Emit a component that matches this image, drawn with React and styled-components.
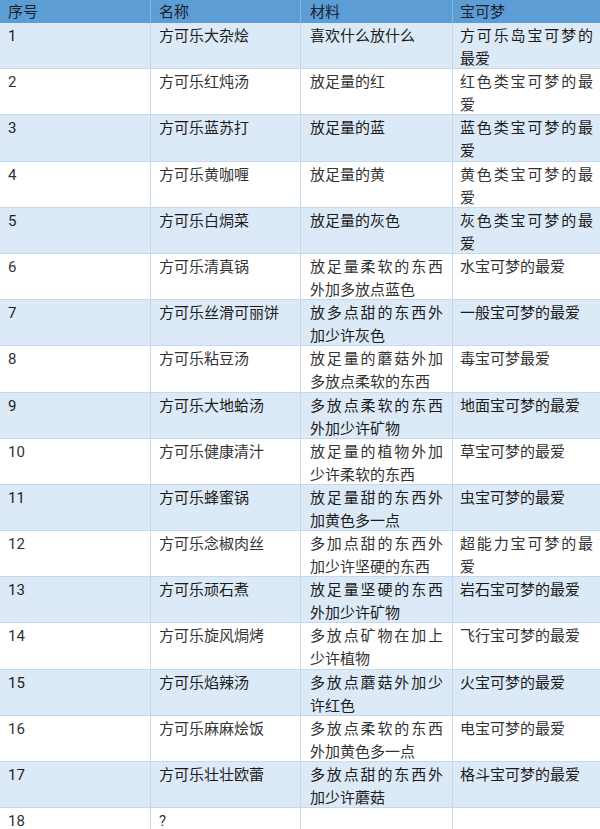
import React from 'react';
import styled, { createGlobalStyle } from 'styled-components';

const GlobalStyle = createGlobalStyle`
  html, body {
    margin: 0;
    padding: 0;
    background: #ffffff;
  }
  body {
    font-family: Roboto, "Noto Sans CJK SC", "Noto Sans", sans-serif;
    overflow: hidden;
  }
`;

const Table = styled.div`
  width: 600px;
  display: flex;
  flex-direction: column;
`;

const Row = styled.div`
  display: grid;
  grid-template-columns: 151px 150px 152px 147px;
  height: ${p => (p.head ? '23px' : '46.2px')};
  box-sizing: border-box;
  background: ${p => (p.head ? '#5d9dd6' : p.shaded ? '#dce9f6' : '#ffffff')};
  border-bottom: 1px solid ${p => (p.head ? '#5d9dd6' : '#c6d9ec')};
  color: ${p => (p.head ? '#17222e' : p.shaded ? '#1c1c1c' : '#333333')};
`;

const Cell = styled.div`
  box-sizing: border-box;
  padding: ${p => (p.head ? 1 : 2)}px ${p => p.pr}px 0 ${p => p.pl}px;
  font-size: 15px;
  line-height: 23px;
  text-align: justify;
  overflow: hidden;
  border-right: 1px solid ${p => (p.head ? '#88b8e4' : '#c6d9ec')};
  &:last-child {
    border-right: none;
  }
`;

const pads = [
  [8, 4],
  [8, 4],
  [9, 9],
  [7, 7],
];

const rows = [
  ['1', '方可乐大杂烩', '喜欢什么放什么', '方可乐岛宝可梦的最爱'],
  ['2', '方可乐红炖汤', '放足量的红', '红色类宝可梦的最爱'],
  ['3', '方可乐蓝苏打', '放足量的蓝', '蓝色类宝可梦的最爱'],
  ['4', '方可乐黄咖喱', '放足量的黄', '黄色类宝可梦的最爱'],
  ['5', '方可乐白焗菜', '放足量的灰色', '灰色类宝可梦的最爱'],
  ['6', '方可乐清真锅', '放足量柔软的东西外加多放点蓝色', '水宝可梦的最爱'],
  ['7', '方可乐丝滑可丽饼', '放多点甜的东西外加少许灰色', '一般宝可梦的最爱'],
  ['8', '方可乐粘豆汤', '放足量的蘑菇外加多放点柔软的东西', '毒宝可梦最爱'],
  ['9', '方可乐大地蛤汤', '多放点柔软的东西外加少许矿物', '地面宝可梦的最爱'],
  ['10', '方可乐健康清汁', '放足量的植物外加少许柔软的东西', '草宝可梦的最爱'],
  ['11', '方可乐蜂蜜锅', '放足量甜的东西外加黄色多一点', '虫宝可梦的最爱'],
  ['12', '方可乐念椒肉丝', '多加点甜的东西外加少许坚硬的东西', '超能力宝可梦的最爱'],
  ['13', '方可乐顽石煮', '放足量坚硬的东西外加少许矿物', '岩石宝可梦的最爱'],
  ['14', '方可乐旋风焗烤', '多放点矿物在加上少许植物', '飞行宝可梦的最爱'],
  ['15', '方可乐焰辣汤', '多放点蘑菇外加少许红色', '火宝可梦的最爱'],
  ['16', '方可乐麻麻烩饭', '多放点柔软的东西外加黄色多一点', '电宝可梦的最爱'],
  ['17', '方可乐壮壮欧蕾', '多放点甜的东西外加少许蘑菇', '格斗宝可梦的最爱'],
  ['18', '?', '', ''],
];

export default function App() {
  return (
    <>
      <GlobalStyle />
      <Table>
        <Row head>
          {['序号', '名称', '材料', '宝可梦'].map((t, i) => (
            <Cell head key={t} pl={pads[i][0]} pr={pads[i][1]}>
              {t}
            </Cell>
          ))}
        </Row>
        {rows.map((r, idx) => (
          <Row key={r[0]} shaded={idx % 2 === 0}>
            {r.map((t, i) => (
              <Cell key={i} pl={pads[i][0]} pr={pads[i][1]}>
                {t}
              </Cell>
            ))}
          </Row>
        ))}
      </Table>
    </>
  );
}
